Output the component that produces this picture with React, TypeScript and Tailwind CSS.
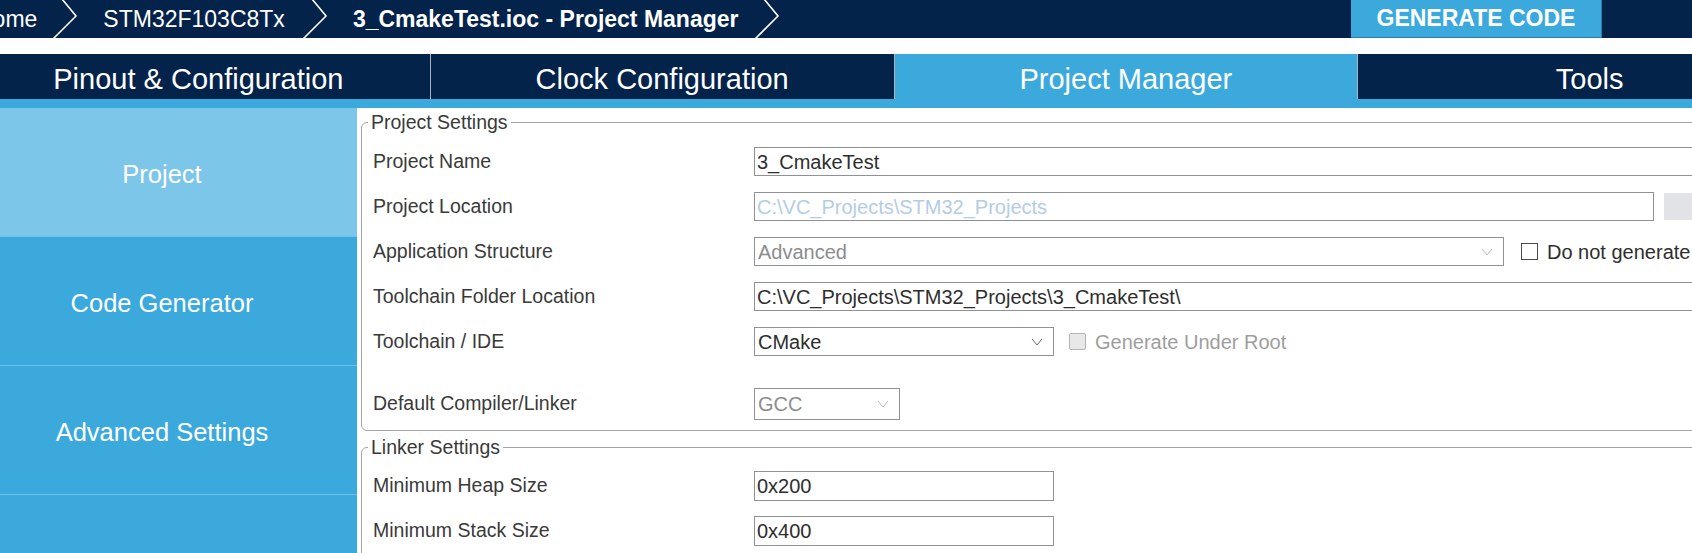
import React from "react";

const FONT = { fontFamily: '"Liberation Sans", Arial, sans-serif' };

function Crumb() {
  return (
    <svg width="25" height="38" viewBox="0 0 25 38" className="shrink-0 overflow-visible">
      <polyline points="10,-1 24,16 1,39" fill="none" stroke="#ffffff" strokeWidth="1.6" />
    </svg>
  );
}

function Chevron({ color }: { color: string }) {
  return (
    <svg width="12" height="8" viewBox="0 0 12 8" className="shrink-0">
      <polyline points="1,1 6,7 11,1" fill="none" stroke={color} strokeWidth="1" />
    </svg>
  );
}

function Label({ children }: { children: React.ReactNode }) {
  return <div className="w-[392px] shrink-0 pl-[11px] text-[19.5px] text-[#3a3a3a]">{children}</div>;
}

function Row({ children, className = "" }: { children: React.ReactNode; className?: string }) {
  return <div className={`flex h-[45px] items-center ${className}`}>{children}</div>;
}

function Box({ text, className = "", muted = "" }: { text: string; className?: string; muted?: string }) {
  return (
    <div
      className={`flex h-[29px] shrink-0 items-center border border-[#8e9196] bg-white pl-[2px] text-[20px] ${muted || "text-[#2e2e2e]"} ${className}`}
    >
      <span className="whitespace-nowrap">{text}</span>
    </div>
  );
}

function Select({
  text,
  className,
  disabled,
}: {
  text: string;
  className: string;
  disabled?: boolean;
}) {
  return (
    <div
      className={`flex shrink-0 items-center justify-between border border-[#8e9196] bg-white pl-[3px] pr-[10px] text-[20px] ${
        disabled ? "text-[#8d8d8d]" : "text-[#2e2e2e]"
      } ${className}`}
    >
      <span className="whitespace-nowrap">{text}</span>
      <Chevron color={disabled ? "#b9b9b9" : "#6a6a6a"} />
    </div>
  );
}

export default function App() {
  const tabs = [
    { name: "Pinout & Configuration", active: false },
    { name: "Clock Configuration", active: false },
    { name: "Project Manager", active: true },
    { name: "Tools", active: false },
  ];
  const side = ["Project", "Code Generator", "Advanced Settings", ""];

  return (
    <div className="h-[553px] w-[1692px] overflow-hidden bg-white" style={FONT}>
      <div className="ml-[-33px] flex w-[1854px] flex-col">
        {/* breadcrumb bar */}
        <div className="flex h-[38px] items-center bg-[#03234b] text-white">
          <div className="flex items-center pl-[9px]">
            <span className="text-[23px]">Home</span>
            <span className="ml-[15px]"><Crumb /></span>
            <span className="ml-[26px] text-[23px]">STM32F103C8Tx</span>
            <span className="ml-[17px]"><Crumb /></span>
            <span className="ml-[26px] text-[23px] font-bold">3_CmakeTest.ioc - Project Manager</span>
            <span className="ml-[16px]"><Crumb /></span>
          </div>
          <button className="ml-auto mr-[219px] flex h-[38px] w-[251px] items-center justify-center self-start border-b border-r border-[#2a7cad] bg-[#3ca9dc] text-[23px] font-bold text-white">
            GENERATE CODE
          </button>
        </div>

        <div className="h-[16px] bg-white" />

        {/* main tabs */}
        <div className="flex h-[45px] bg-[#03234b]">
          {tabs.map((t, i) => (
            <div
              key={t.name}
              className={`flex flex-1 items-center justify-center pt-[6px] text-[29px] text-white ${
                i > 0 ? "border-l border-[#aab3bf]" : ""
              } ${t.active ? "bg-[#3ca9dc]" : ""}`}
            >
              {t.name}
            </div>
          ))}
        </div>
        <div className="h-[9px] bg-[#3ca9dc]" />

        <div className="flex">
          {/* side menu */}
          <div className="flex w-[390px] shrink-0 flex-col bg-[#3ca9dc] text-white">
            {side.map((s, i) => (
              <div
                key={i}
                className={`flex h-[129px] items-center justify-center border-b border-[#74c0e6] pt-[5px] text-[25.5px] ${
                  i === 0 ? "bg-[#7cc6ea]" : ""
                }`}
              >
                {s}
              </div>
            ))}
          </div>

          {/* settings */}
          <div className="flex flex-1 flex-col pl-[4px] pr-[4px]">
            <fieldset className="rounded-[6px] border border-[#a3a3a3] px-0 pb-[4px] pt-[2px]">
              <legend className="ml-[6px] px-[3px] text-[19.5px] text-[#3a3a3a]">Project Settings</legend>
              <Row>
                <Label>Project Name</Label>
                <Box text="3_CmakeTest" className="w-[1040px]" />
              </Row>
              <Row>
                <Label>Project Location</Label>
                <Box text="C:\VC_Projects\STM32_Projects" className="w-[900px]" muted="text-[#b3cde8]" />
                <div className="ml-[10px] h-[27px] w-[60px] bg-[#e1e3e6]" />
              </Row>
              <Row>
                <Label>Application Structure</Label>
                <Select text="Advanced" className="h-[29px] w-[750px]" disabled />
                <div className="ml-[17px] h-[17px] w-[17px] shrink-0 border border-[#4a4a4a] bg-white" />
                <span className="ml-[9px] whitespace-nowrap text-[20px] text-[#2e2e2e]">
                  Do not generate the main()
                </span>
              </Row>
              <Row>
                <Label>Toolchain Folder Location</Label>
                <Box text="C:\VC_Projects\STM32_Projects\3_CmakeTest\" className="w-[1040px]" />
              </Row>
              <Row>
                <Label>Toolchain / IDE</Label>
                <Select text="CMake" className="h-[29px] w-[300px]" />
                <div className="ml-[15px] h-[17px] w-[17px] shrink-0 rounded-[2px] border border-[#b4b4b4] bg-[#e8e8e8]" />
                <span className="ml-[9px] whitespace-nowrap text-[20px] text-[#9e9e9e]">Generate Under Root</span>
              </Row>
              <Row className="mt-[17px]">
                <Label>Default Compiler/Linker</Label>
                <Select text="GCC" className="h-[32px] w-[146px]" disabled />
              </Row>
            </fieldset>

            <fieldset className="mt-[2px] rounded-[6px] border border-[#a3a3a3] px-0 pb-[6px] pt-[1px]">
              <legend className="ml-[6px] px-[3px] text-[19.5px] text-[#3a3a3a]">Linker Settings</legend>
              <Row>
                <Label>Minimum Heap Size</Label>
                <Box text="0x200" className="h-[30px] w-[300px]" />
              </Row>
              <Row>
                <Label>Minimum Stack Size</Label>
                <Box text="0x400" className="h-[30px] w-[300px]" />
              </Row>
            </fieldset>
          </div>
        </div>
      </div>
    </div>
  );
}
